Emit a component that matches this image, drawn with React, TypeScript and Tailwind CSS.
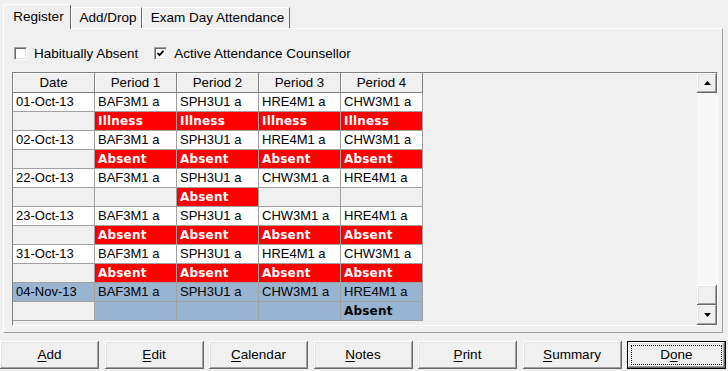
import React from 'react';

const raised =
  "shadow-[inset_-1px_-1px_0_#696969,inset_1px_1px_0_#ffffff,inset_-2px_-2px_0_#a0a0a0,inset_2px_2px_0_#e3e3e3]";

type RowData = { d: string; p: string[]; s: string[]; sel?: boolean };

const data: RowData[] = [
  { d: '01-Oct-13', p: ['BAF3M1 a', 'SPH3U1 a', 'HRE4M1 a', 'CHW3M1 a'], s: ['Illness', 'Illness', 'Illness', 'Illness'] },
  { d: '02-Oct-13', p: ['BAF3M1 a', 'SPH3U1 a', 'HRE4M1 a', 'CHW3M1 a'], s: ['Absent', 'Absent', 'Absent', 'Absent'] },
  { d: '22-Oct-13', p: ['BAF3M1 a', 'SPH3U1 a', 'CHW3M1 a', 'HRE4M1 a'], s: ['', 'Absent', '', ''] },
  { d: '23-Oct-13', p: ['BAF3M1 a', 'SPH3U1 a', 'CHW3M1 a', 'HRE4M1 a'], s: ['Absent', 'Absent', 'Absent', 'Absent'] },
  { d: '31-Oct-13', p: ['BAF3M1 a', 'SPH3U1 a', 'HRE4M1 a', 'CHW3M1 a'], s: ['Absent', 'Absent', 'Absent', 'Absent'] },
  { d: '04-Nov-13', p: ['BAF3M1 a', 'SPH3U1 a', 'CHW3M1 a', 'HRE4M1 a'], s: ['', '', '', 'Absent'], sel: true },
];

const cellBase =
  'w-[82px] h-[19px] shrink-0 border-r border-b border-[#a0a0a0] pl-[3px] leading-[18px] whitespace-nowrap overflow-hidden';
const boldText = "font-['DejaVu_Sans',sans-serif] font-bold text-[12px] tracking-[0.2px]";

function Header() {
  const cols = ['Date', 'Period 1', 'Period 2', 'Period 3', 'Period 4'];
  return (
    <div className="flex">
      {cols.map((c) => (
        <div
          key={c}
          className="w-[82px] h-[20px] shrink-0 border-r border-b border-[#808080] bg-[#f0f0f0] shadow-[inset_1px_1px_0_#ffffff] text-center leading-[19px] text-[13.3px]"
        >
          {c}
        </div>
      ))}
    </div>
  );
}

function Rows() {
  return (
    <>
      {data.map((r) => (
        <React.Fragment key={r.d}>
          <div className="flex">
            <div className={`${cellBase} ${r.sel ? 'bg-[#99b4d1]' : 'bg-white'}`}>{r.d}</div>
            {r.p.map((p, i) => (
              <div key={i} className={`${cellBase} ${r.sel ? 'bg-[#99b4d1]' : 'bg-white'}`}>
                {p}
              </div>
            ))}
          </div>
          <div className="flex">
            <div className={`${cellBase} bg-[#f0f0f0]`}></div>
            {r.s.map((s, i) => {
              if (r.sel) {
                return (
                  <div key={i} className={`${cellBase} bg-[#99b4d1] text-black ${boldText}`}>
                    {s}
                  </div>
                );
              }
              return s ? (
                <div key={i} className={`${cellBase} bg-[#ff0000] text-white ${boldText}`}>
                  {s}
                </div>
              ) : (
                <div key={i} className={`${cellBase} bg-[#f0f0f0]`}></div>
              );
            })}
          </div>
        </React.Fragment>
      ))}
    </>
  );
}

function Scrollbar() {
  return (
    <div className="w-[20px] shrink-0 flex flex-col">
      <div className={`h-[20px] bg-[#f0f0f0] ${raised} flex items-center justify-center`}>
        <svg width="7" height="4" viewBox="0 0 7 4">
          <polygon points="3.5,0 7,4 0,4" fill="#000" />
        </svg>
      </div>
      <div className="flex-1 bg-[#f7f7f7] flex flex-col justify-end">
        <div className={`h-[20px] bg-[#f0f0f0] ${raised}`}></div>
      </div>
      <div className={`h-[20px] bg-[#f0f0f0] ${raised} flex items-center justify-center`}>
        <svg width="7" height="4" viewBox="0 0 7 4">
          <polygon points="0,0 7,0 3.5,4" fill="#000" />
        </svg>
      </div>
    </div>
  );
}

function Checkbox({ checked, label }: { checked: boolean; label: string }) {
  return (
    <div className="flex items-center">
      <div className="w-[13px] h-[13px] bg-white border-t border-l border-t-[#a0a0a0] border-l-[#a0a0a0] border-r border-b border-r-white border-b-white shadow-[inset_1px_1px_0_#696969,inset_-1px_-1px_0_#e3e3e3] flex items-center justify-center">
        {checked && (
          <svg width="9" height="9" viewBox="0 0 9 9">
            <polyline points="1.5,4 3.5,6.2 7.5,1.8" fill="none" stroke="#000" strokeWidth="1.8" />
          </svg>
        )}
      </div>
      <span className="ml-[7px] leading-[13px]">{label}</span>
    </div>
  );
}

function Btn({ pre, u, post, def }: { pre: string; u: string; post: string; def?: boolean }) {
  const label = (
    <span>
      {pre}
      <span className="underline underline-offset-2">{u}</span>
      {post}
    </span>
  );
  if (def) {
    return (
      <div className="h-[28px] border border-black bg-[#f0f0f0]">
        <div className={`h-full w-full ${raised} p-[3px]`}>
          <div className="h-full w-full border border-dotted border-black flex items-center justify-center">
            {label}
          </div>
        </div>
      </div>
    );
  }
  return (
    <div className={`h-[28px] bg-[#f0f0f0] ${raised} flex items-center justify-center`}>{label}</div>
  );
}

export default function App() {
  return (
    <div className="w-[728px] h-[371px] bg-[#f0f0f0] text-[13.5px] text-black font-['Liberation_Sans',Arial,sans-serif] pt-[4px] overflow-hidden">
      {/* Tabs */}
      <div className="flex items-end h-[24px] pl-[3px] relative z-10">
        <div className="w-[68px] h-[25px] mb-[-1px] bg-[#f0f0f0] border-t border-l border-t-white border-l-white border-r border-r-[#696969] rounded-t-[2px] flex items-center justify-center pl-[3px]">
          Register
        </div>
        <div className="w-[71px] h-[21px] bg-[#f0f0f0] border-t border-l border-t-white border-l-white border-r border-r-[#696969] flex items-center justify-center pl-[3px] pt-[1px]">
          Add/Drop
        </div>
        <div className="w-[148px] h-[21px] bg-[#f0f0f0] border-t border-l border-t-white border-l-white border-r border-r-[#696969] flex items-center justify-center pl-[3px] pt-[1px]">
          Exam Day Attendance
        </div>
      </div>
      {/* Panel */}
      <div className="ml-[3px] w-[720px] h-[305px] border-t border-l border-t-white border-l-white border-r border-b border-r-[#a0a0a0] border-b-[#a0a0a0]">
        <div className="flex items-center pt-[18px] pl-[10px] h-[31px]">
          <Checkbox checked={false} label="Habitually Absent" />
          <div className="w-[16px]" />
          <Checkbox checked={true} label="Active Attendance Counsellor" />
        </div>
        <div className="ml-[8px] mt-[12px] w-[706px] h-[254px] border-t border-l border-t-[#808080] border-l-[#808080] border-r border-b border-r-white border-b-white flex text-[13px]">
          <div className="flex-1 flex flex-col">
            <Header />
            <Rows />
          </div>
          <Scrollbar />
        </div>
      </div>
      {/* Buttons */}
      <div className="mt-[8px] grid grid-cols-[repeat(7,99px)] gap-x-[5.5px]">
        <Btn pre="" u="A" post="dd" />
        <Btn pre="" u="E" post="dit" />
        <Btn pre="" u="C" post="alendar" />
        <Btn pre="" u="N" post="otes" />
        <Btn pre="" u="P" post="rint" />
        <Btn pre="" u="S" post="ummary" />
        <Btn pre="D" u="o" post="ne" def />
      </div>
    </div>
  );
}
